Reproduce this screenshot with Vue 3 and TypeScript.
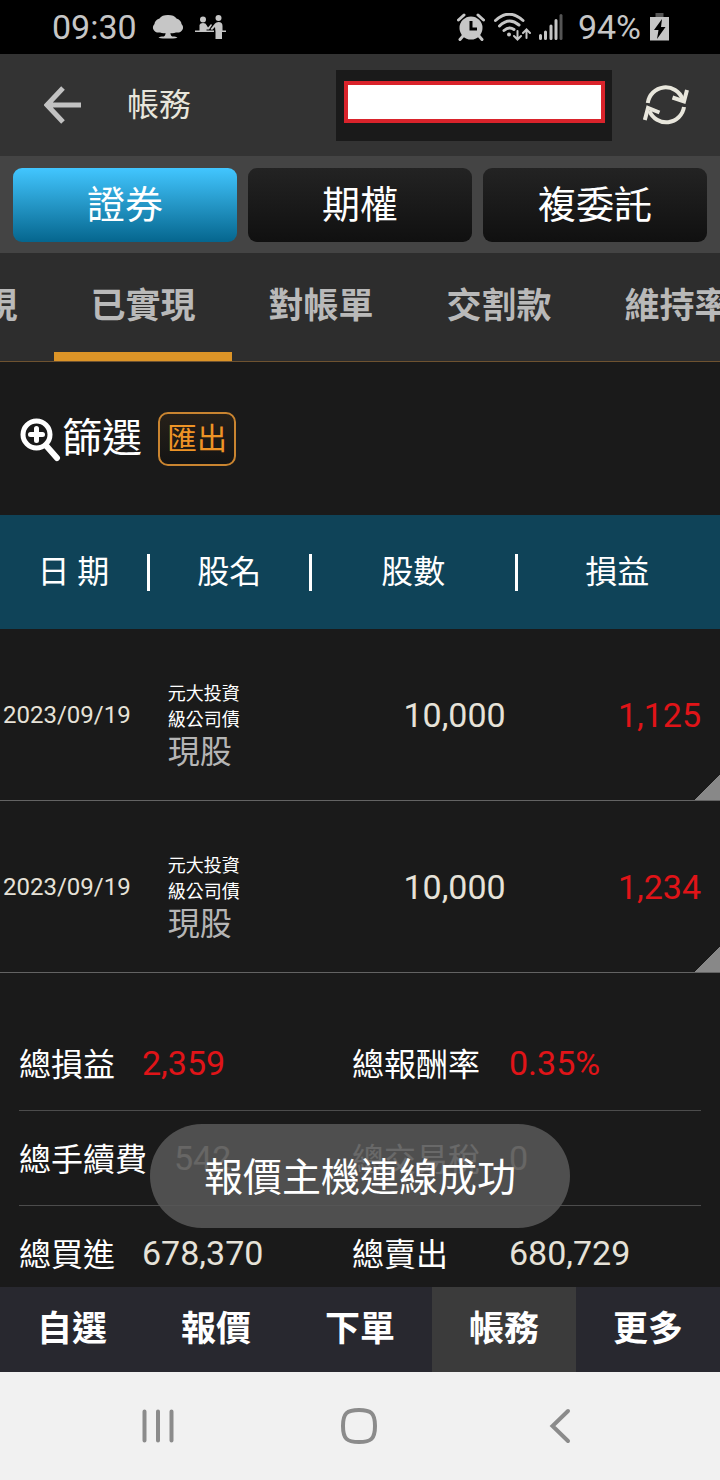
<script setup lang="ts">
import { onMounted, ref } from 'vue'

interface Holding {
  date: string
  name: string[]
  kind: string
  shares: string
  profit: string
}

interface Total {
  label: string
  value: string
  up?: boolean
}

const markets = ['證券', '期權', '複委託']
const market = ref('證券')

const tabs = ['未實現', '已實現', '對帳單', '交割款', '維持率']
const tab = ref('已實現')
const tabStrip = ref<HTMLElement | null>(null)

const holdings: Holding[] = [
  { date: '2023/09/19', name: ['元大投資', '級公司債'], kind: '現股', shares: '10,000', profit: '1,125' },
  { date: '2023/09/19', name: ['元大投資', '級公司債'], kind: '現股', shares: '10,000', profit: '1,234' },
]

const totals: Total[][] = [
  [{ label: '總損益', value: '2,359', up: true }, { label: '總報酬率', value: '0.35%', up: true }],
  [{ label: '總手續費', value: '542' }, { label: '總交易稅', value: '0' }],
  [{ label: '總買進', value: '678,370' }, { label: '總賣出', value: '680,729' }],
]

const sections = ['自選', '報價', '下單', '帳務', '更多']
const section = ref('帳務')
const account = ref('')

// Open with the active tab in view and part of the first one scrolled off.
onMounted(() => {
  if (tabStrip.value) tabStrip.value.scrollLeft = 124
})
</script>

<template>
  <div class="screen">
    <div class="status">
      <span>09:30</span>
      <svg class="tree" width="32" height="24" viewBox="0 0 32 24" aria-hidden="true">
        <path d="M16 0c4 0 7 1 8.500 3.500C28 4.500 29.500 7 29.500 9c1.500 1.500 2 3.500 1.200 5.200C30 16.500 27 18 24 17.500c-2 .9-4 1-5.500.5 0 1.800.5 3 1.800 3.500 2.500 0 4.500.4 5.200 1.200-3 .8-6 .9-9.500.9s-6.500-.1-9.500-.9c.7-.8 2.700-1.200 5.200-1.200 1.300-.5 1.800-1.700 1.800-3.500-1.500.5-3.500.4-5.500-.5-3 .5-6-1-6.700-3.300C.5 12.500 1 10.500 2.500 9c0-2 1.500-4.500 5-5.500C9 1 12 0 16 0z" />
      </svg>
      <svg class="people" width="31" height="24" viewBox="0 0 31 24" aria-hidden="true">
        <circle cx="8" cy="4.500" r="3" />
        <circle cx="23.500" cy="3" r="3" />
        <path d="M4.500 10Q5 8 8 8q3 0 3.500 2l1.500 2.500 3-3.500 1 1-3 4.500h-2.500V16H4.500z" />
        <path d="M20 8.500q1-1.500 3.500-1.500Q27.500 7 27.500 11v4.500H31v1.500h-4v7h-6.500v-7L20 12l-3 3-1.500-1zM0 15.500h19V17H0z" />
      </svg>
      <span class="spacer"></span>
      <svg class="alarm" width="28" height="28" viewBox="0 0 28 28" aria-hidden="true">
        <circle cx="14" cy="15" r="11.500" />
        <path class="line" d="M1.500 7L7 2M26.500 7L21 2M6 23l-3 3.500M22 23l3 3.500" />
        <path class="cut" d="M14 8v8h6" />
      </svg>
      <svg class="wifi" width="37" height="29" viewBox="0 0 37 29" aria-hidden="true">
        <path class="line" d="M1.500 7.500Q15-5 29 7.500M5.500 13Q15 3.500 25 12M10 17.500Q15 13 20 16.500" />
        <circle cx="15" cy="21.500" r="2" />
        <path class="thin" d="M23.500 18v8M20 23l3.500 3.500L27 23M32.500 25v-8M29 20l3.500-3.500L36 20" />
      </svg>
      <svg class="signal" width="24" height="26" viewBox="0 0 24 26" aria-hidden="true">
        <path class="line" d="M1.500 21.500v3M6.500 18v6.500M12 12v12.500M17 6.500v18" />
        <path class="line faint" d="M22 1.500v23" />
      </svg>
      <span class="charge">94%</span>
      <svg class="battery" width="19" height="28" viewBox="0 0 19 28" aria-hidden="true">
        <path class="cap" d="M5.500 0h8v5h-8z" />
        <path d="M0 4h19v23.500H0z" />
        <path class="bolt" d="M12 6L4 17h4.500L7 26l8.500-12H11z" />
      </svg>
    </div>

    <header class="top">
      <button class="icon-button back" type="button" aria-label="返回">
        <svg width="38" height="38" viewBox="0 0 38 38" aria-hidden="true">
          <path d="M19 2L3 19l16 17M3 19h34" />
        </svg>
      </button>
      <h1>帳務</h1>
      <label class="account"><input v-model="account" type="text" aria-label="帳號" /></label>
      <button class="icon-button refresh" type="button" aria-label="重新整理">
        <svg width="46" height="42" viewBox="0 0 46 42" aria-hidden="true">
          <path d="M4.800 19A18 18 0 0 1 39.500 15M41 23A18 18 0 0 1 6.500 27" />
          <path d="M29.500 13.500L41 17.500L44 6M16.500 28.500L5 24L1.800 36" />
        </svg>
      </button>
    </header>

    <div class="markets">
      <button v-for="m in markets" :key="m" type="button" :class="{ on: m === market }" @click="market = m">{{ m }}</button>
    </div>

    <div ref="tabStrip" class="tabs" role="tablist">
      <button v-for="t in tabs" :key="t" type="button" role="tab" :aria-selected="t === tab" :class="{ on: t === tab }" @click="tab = t">{{ t }}</button>
    </div>

    <main>
      <div class="tools">
        <button class="filter" type="button">
          <svg width="42" height="46" viewBox="0 0 42 46" aria-hidden="true">
            <circle cx="16.500" cy="18.500" r="13.500" />
            <path d="M16.500 12.500v12M10.500 18.500h12" />
            <path class="handle" d="M26 29.500L37 42" />
          </svg>
          篩選
        </button>
        <button class="export" type="button">匯出</button>
      </div>

      <table>
        <colgroup>
          <col class="c-date" /><col class="c-name" /><col class="c-shares" /><col />
        </colgroup>
        <thead>
          <tr>
            <th scope="col">日 期</th>
            <th scope="col">股名</th>
            <th scope="col">股數</th>
            <th scope="col">損益</th>
          </tr>
        </thead>
        <tbody>
          <tr v-for="(h, i) in holdings" :key="i">
            <td class="date">{{ h.date }}</td>
            <td class="name">
              <span v-for="line in h.name" :key="line">{{ line }}</span>
              <span class="kind">{{ h.kind }}</span>
            </td>
            <td class="shares">{{ h.shares }}</td>
            <td class="profit">{{ h.profit }}</td>
          </tr>
        </tbody>
      </table>

      <div class="totals">
        <dl v-for="(row, i) in totals" :key="i">
          <div v-for="t in row" :key="t.label">
            <dt>{{ t.label }}</dt>
            <dd :class="{ up: t.up }">{{ t.value }}</dd>
          </div>
        </dl>
      </div>

      <div class="toast" role="status">報價主機連線成功</div>
    </main>

    <nav class="sections">
      <button v-for="s in sections" :key="s" type="button" :class="{ on: s === section }" @click="section = s">{{ s }}</button>
    </nav>

    <div class="system">
      <button type="button" aria-label="最近使用">
        <svg width="38" height="38" viewBox="0 0 38 38" aria-hidden="true"><path d="M5.500 4.500v29M19 4.500v29M32.500 4.500v29" /></svg>
      </button>
      <button type="button" aria-label="主畫面">
        <svg width="38" height="38" viewBox="0 0 38 38" aria-hidden="true"><path d="M19 3C31 3 35 6 35 19S31 35 19 35 3 32 3 19 7 3 19 3z" /></svg>
      </button>
      <button type="button" aria-label="返回上一頁">
        <svg width="38" height="38" viewBox="0 0 38 38" aria-hidden="true"><path d="M27 4L11.500 19L27 34" /></svg>
      </button>
    </div>
  </div>
</template>

<style>
body {
  margin: 0;
  background: #1a1a1a;
}
</style>

<style scoped>
.screen {
  display: flex;
  flex-direction: column;
  height: 100vh;
  overflow: hidden;
  background: #1a1a1a;
  color: #fff;
  font-family: Roboto, "Noto Sans CJK TC", sans-serif;
}

svg {
  display: block;
  flex: none;
}

button {
  margin: 0;
  padding: 0;
  border: 0;
  background: none;
  color: inherit;
  font: inherit;
  line-height: 48px;
  cursor: pointer;
}

.status {
  display: flex;
  flex: none;
  align-items: center;
  height: 54px;
  padding: 0 51px 0 52px;
  background: #000;
  color: #c6c6c6;
  font-size: 34px;
  line-height: 54px;
}

.status svg {
  fill: #c6c6c6;
}

.status .line,
.status .thin {
  fill: none;
  stroke: #c6c6c6;
  stroke-width: 3;
  stroke-linecap: round;
}

.status .thin {
  stroke-width: 2;
}

.status .faint {
  stroke: #555;
}

.status .cut {
  fill: none;
  stroke: #000;
  stroke-width: 3;
}

.status .cap {
  fill: #555;
}

.status .bolt {
  fill: #000;
}

.tree {
  margin-left: 15px;
}

.people {
  margin-left: 11px;
}

.spacer {
  flex: 1;
}

.wifi {
  margin-left: 9px;
}

.signal {
  margin-left: 8px;
}

.charge {
  margin-left: 15px;
}

.battery {
  margin-left: 9px;
}

.top {
  display: flex;
  flex: none;
  align-items: center;
  height: 102px;
  padding: 0 31px 0 44px;
  background: #333;
}

.icon-button svg {
  fill: none;
  stroke-width: 4;
}

.back svg {
  stroke: #c2c2c2;
  stroke-width: 5;
}

.refresh svg {
  stroke: #e8e6dc;
}

h1 {
  flex: 1;
  margin: 0 0 0 45px;
  color: #e8e6dc;
  font-size: 32px;
  font-weight: 400;
  line-height: 48px;
}

.account {
  display: block;
  box-sizing: border-box;
  width: 276px;
  height: 71px;
  margin-right: 31px;
  padding: 11px 7px 0 8px;
  background: #1a1a1a;
}

.account input {
  display: block;
  box-sizing: border-box;
  width: 100%;
  height: 42px;
  padding: 0 8px;
  border: 4px solid #d9232b;
  border-radius: 0;
  outline: 0;
  background: #fff;
  font: inherit;
  font-size: 24px;
}

.markets {
  display: flex;
  flex: none;
  gap: 11px;
  padding: 12px 13px 11px;
  background: #444;
}

.markets button {
  flex: 1;
  height: 74px;
  border-radius: 9px;
  background: linear-gradient(#232323, #101010);
  font-size: 38px;
}

.markets .on {
  background: linear-gradient(#42c6ff, #2191c0 55%, #05668e);
}

.tabs {
  display: flex;
  flex: none;
  overflow-x: auto;
  scrollbar-width: none;
  border-bottom: 1px solid #6e5230;
  background: #2d2d2d;
  color: #b9b9b9;
}

.tabs button {
  box-sizing: border-box;
  flex: 0 0 178px;
  height: 108px;
  border-top: 9px solid transparent;
  border-bottom: 9px solid transparent;
  font-size: 35px;
  font-weight: 700;
}

.tabs .on {
  border-bottom-color: #dc9427;
}

main {
  position: relative;
  flex: 1;
  min-height: 0;
  overflow: hidden;
}

.tools {
  display: flex;
  align-items: center;
  gap: 16px;
  height: 153px;
  padding: 0 20px;
}

.filter {
  display: flex;
  align-items: center;
  font-size: 40px;
}

.filter svg {
  fill: none;
  stroke: #fff;
  stroke-width: 5;
  stroke-linecap: round;
}

.filter .handle {
  stroke-width: 6;
}

.export {
  width: 78px;
  height: 54px;
  border: 2px solid #c98430;
  border-radius: 10px;
  background: linear-gradient(#262019, #141414);
  color: #ee9426;
  font-size: 30px;
}

table {
  width: 100%;
  border-collapse: separate;
  border-spacing: 0;
  table-layout: fixed;
}

.c-date {
  width: 20.8%;
}

.c-name {
  width: 22.5%;
}

.c-shares {
  width: 28.6%;
}

th {
  height: 114px;
  padding: 0 3px 0 0;
  background: linear-gradient(#fff, #fff) right center / 3px 37px no-repeat #0f4358;
  font-size: 32px;
  font-weight: 400;
  line-height: 48px;
}

th:last-child {
  background: #0f4358;
}

td {
  box-sizing: border-box;
  height: 172px;
  padding: 0;
  border-bottom: 1px solid #636363;
  color: #e6e2d8;
  font-size: 34px;
}

.date {
  padding-left: 3px;
  font-size: 24px;
}

.name {
  padding: 23px 0 0 18px;
  color: #fff;
  font-size: 18px;
  line-height: 26px;
}

.name span {
  display: block;
}

.name .kind {
  color: #b5b5b5;
  font-size: 32px;
  line-height: 38px;
}

.shares {
  padding-right: 12px;
  text-align: right;
}

.profit {
  padding-right: 19px;
  background: linear-gradient(135deg, transparent 50%, #888 50%) right bottom / 26px 26px no-repeat;
  color: #e01418;
  text-align: right;
}

.totals {
  padding: 43px 19px 0;
}

dl {
  display: grid;
  grid-template-columns: 333fr 349fr;
  align-items: center;
  height: 94px;
  margin: 0;
  border-bottom: 1px solid #4c4c4c;
  line-height: 48px;
}

dl div {
  display: flex;
  align-items: center;
  gap: 27px;
}

dl div:last-child {
  gap: 0;
}

dl div:last-child dt {
  width: 157px;
}

dt {
  padding-top: 3px;
  font-size: 32px;
}

dd {
  margin: 0;
  color: #e6e2d8;
  font-size: 34px;
}

.up {
  color: #e01418;
}

.toast {
  position: absolute;
  bottom: 59px;
  left: 50%;
  padding: 4px 54px 0;
  border-radius: 52px;
  background: rgba(86, 86, 86, 0.89);
  font-size: 39px;
  line-height: 100px;
  white-space: nowrap;
  transform: translateX(-50%);
}

.sections {
  display: flex;
  flex: none;
  background: #28282f;
}

.sections button {
  flex: 1;
  height: 85px;
  font-size: 35px;
  font-weight: 700;
}

.sections .on {
  background: #3b3b3b;
}

.system {
  display: flex;
  flex: none;
  height: 108px;
  padding: 0 59px 0 57px;
  background: #f1f1f1;
}

.system button {
  display: flex;
  flex: 1;
  align-items: center;
  justify-content: center;
}

.system svg {
  fill: none;
  stroke: #8b8b8b;
  stroke-width: 4;
  stroke-linecap: round;
}
</style>
